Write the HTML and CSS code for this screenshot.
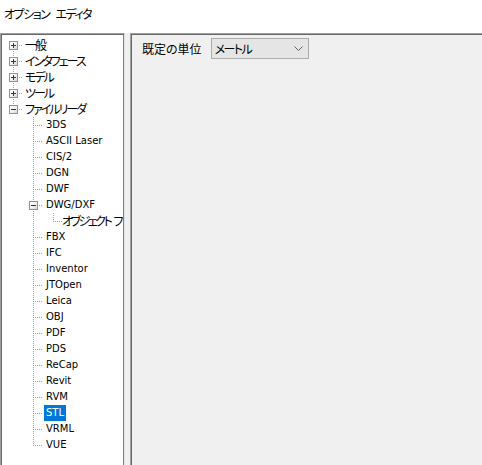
FILE: index.html
```html
<!DOCTYPE html>
<html lang="ja">
<head>
<meta charset="utf-8">
<title>オプション エディタ</title>
<link rel="stylesheet" href="styles.css">
</head>
<body>
<div class="window">
  <div class="titlebar">オプション エディタ</div>
  <div class="panes">
    <div class="tree">
      <div class="row"><span class="cell first"><span class="box plus"></span></span><span class="label ja">一般</span></div>
      <div class="row"><span class="cell tee"><span class="box plus"></span></span><span class="label ja">インタフェース</span></div>
      <div class="row"><span class="cell tee"><span class="box plus"></span></span><span class="label ja">モデル</span></div>
      <div class="row"><span class="cell tee"><span class="box plus"></span></span><span class="label ja">ツール</span></div>
      <div class="row"><span class="cell elbow"><span class="box minus"></span></span><span class="label ja">ファイルリーダ</span></div>
      <div class="row"><span class="cell"></span><span class="cell tee"></span><span class="label">3DS</span></div>
      <div class="row"><span class="cell"></span><span class="cell tee"></span><span class="label">ASCII Laser</span></div>
      <div class="row"><span class="cell"></span><span class="cell tee"></span><span class="label">CIS/2</span></div>
      <div class="row"><span class="cell"></span><span class="cell tee"></span><span class="label">DGN</span></div>
      <div class="row"><span class="cell"></span><span class="cell tee"></span><span class="label">DWF</span></div>
      <div class="row"><span class="cell"></span><span class="cell tee"><span class="box minus"></span></span><span class="label">DWG/DXF</span></div>
      <div class="row"><span class="cell"></span><span class="cell line"></span><span class="cell elbow"></span><span class="label ja clip">オブジェクト フ</span></div>
      <div class="row"><span class="cell"></span><span class="cell tee"></span><span class="label">FBX</span></div>
      <div class="row"><span class="cell"></span><span class="cell tee"></span><span class="label">IFC</span></div>
      <div class="row"><span class="cell"></span><span class="cell tee"></span><span class="label">Inventor</span></div>
      <div class="row"><span class="cell"></span><span class="cell tee"></span><span class="label">JTOpen</span></div>
      <div class="row"><span class="cell"></span><span class="cell tee"></span><span class="label">Leica</span></div>
      <div class="row"><span class="cell"></span><span class="cell tee"></span><span class="label">OBJ</span></div>
      <div class="row"><span class="cell"></span><span class="cell tee"></span><span class="label">PDF</span></div>
      <div class="row"><span class="cell"></span><span class="cell tee"></span><span class="label">PDS</span></div>
      <div class="row"><span class="cell"></span><span class="cell tee"></span><span class="label">ReCap</span></div>
      <div class="row"><span class="cell"></span><span class="cell tee"></span><span class="label">Revit</span></div>
      <div class="row"><span class="cell"></span><span class="cell tee"></span><span class="label">RVM</span></div>
      <div class="row"><span class="cell"></span><span class="cell tee"></span><span class="label selected">STL</span></div>
      <div class="row"><span class="cell"></span><span class="cell tee"></span><span class="label">VRML</span></div>
      <div class="row"><span class="cell"></span><span class="cell elbow"></span><span class="label">VUE</span></div>
    </div>
    <div class="content">
      <div class="field">
        <span class="field-label ja">既定の単位</span>
        <div class="combo">
          <span class="combo-text ja">メートル</span>
          <svg class="chev" width="9" height="5" viewBox="0 0 9 5"><path d="M0.5 0.5 L4.5 4.5 L8.5 0.5" fill="none" stroke="#606060" stroke-width="1"/></svg>
        </div>
      </div>
    </div>
  </div>
</div>
</body>
</html>
```

FILE: styles.css
```css
html, body {
  margin: 0;
  padding: 0;
  background: #ffffff;
}
body {
  width: 482px;
  height: 465px;
  overflow: hidden;
  font-family: "DejaVu Sans", "Noto Sans CJK JP", sans-serif;
  font-size: 10px;
  color: #000;
}
.window {
  display: flex;
  flex-direction: column;
  height: 465px;
}
.titlebar {
  height: 33px;
  box-sizing: border-box;
  padding: 6px 0 0 4px;
  font-family: "Noto Sans CJK JP", sans-serif;
  font-size: 12px;
  line-height: 16px;
  font-feature-settings: "palt";
  letter-spacing: -1.5px;
  word-spacing: 5px;
}
.panes {
  flex: 1;
  display: flex;
  gap: 5px;
  background: #f0f0f0;
}
.tree {
  width: 125px;
  box-sizing: border-box;
  background: #fff;
  border-top: 1px solid #a0a0a0;
  border-left: 1px solid #a0a0a0;
  border-right: 1px solid #e3e3e3;
  box-shadow: inset 1px 1px 0 #696969, inset -1px 0 0 #828282;
  padding: 3px 0 0 2px;
  overflow: hidden;
}
.content {
  flex: 1;
  box-sizing: border-box;
  border-top: 1px solid #a0a0a0;
  border-left: 1px solid #a0a0a0;
  box-shadow: inset 1px 1px 0 #696969;
  background: #f0f0f0;
  padding: 3px 0 0 11px;
}
.row {
  display: flex;
  height: 16px;
  align-items: stretch;
  white-space: nowrap;
}
.cell {
  flex: 0 0 20px;
  width: 20px;
  display: flex;
  align-items: center;
}
.cell.tee {
  background-image:
    repeating-linear-gradient(to bottom, #a0a0a0 0 1px, transparent 1px 2px),
    repeating-linear-gradient(to right, #a0a0a0 0 1px, transparent 1px 2px);
  background-size: 1px 16px, 9px 1px;
  background-position: 10px 0, 12px 8px;
  background-repeat: no-repeat;
}
.cell.first {
  background-image:
    repeating-linear-gradient(to bottom, #a0a0a0 0 1px, transparent 1px 2px),
    repeating-linear-gradient(to right, #a0a0a0 0 1px, transparent 1px 2px);
  background-size: 1px 8px, 9px 1px;
  background-position: 10px 8px, 12px 8px;
  background-repeat: no-repeat;
}
.cell.elbow {
  background-image:
    repeating-linear-gradient(to bottom, #a0a0a0 0 1px, transparent 1px 2px),
    repeating-linear-gradient(to right, #a0a0a0 0 1px, transparent 1px 2px);
  background-size: 1px 9px, 9px 1px;
  background-position: 10px 0, 12px 8px;
  background-repeat: no-repeat;
}
.cell.line {
  background-image: repeating-linear-gradient(to bottom, #a0a0a0 0 1px, transparent 1px 2px);
  background-size: 1px 16px;
  background-position: 10px 0;
  background-repeat: no-repeat;
}
.box {
  width: 9px;
  height: 9px;
  box-sizing: border-box;
  margin-left: 6px;
  border: 1px solid #919191;
  background: linear-gradient(to bottom right, #ffffff 30%, #d8d8d8);
  background-color: #f4f4f4;
  position: relative;
}
.box::before {
  content: "";
  position: absolute;
  left: 1px;
  top: 3px;
  width: 5px;
  height: 1px;
  background: #1c3a8c;
}
.box.plus::after {
  content: "";
  position: absolute;
  left: 3px;
  top: 1px;
  width: 1px;
  height: 5px;
  background: #1c3a8c;
}
.box.minus::before {
  background: #333;
}
.label {
  padding: 0 2px;
  margin-left: 1px;
  line-height: 16px;
  font-size: 10px;
}
.ja {
  font-family: "Noto Sans CJK JP", sans-serif;
  font-size: 12px;
  font-feature-settings: "palt";
  letter-spacing: -2px;
}
.label.ja {
  margin-left: 0;
}
.label.clip {
  padding-left: 0;
  margin-left: -1px;
  letter-spacing: -2.5px;
  word-spacing: 3px;
}
.selected {
  background: #0078d7;
  color: #fff;
}
.field {
  display: flex;
  align-items: center;
  gap: 9px;
  padding-top: 1px;
}
.field-label {
  letter-spacing: 0;
}
.combo {
  width: 98px;
  height: 21px;
  box-sizing: border-box;
  border: 1px solid #adadad;
  background: #e5e5e5;
  display: flex;
  align-items: center;
  justify-content: space-between;
  padding: 0 5px 0 3px;
}
.combo-text {
  line-height: 16px;
  letter-spacing: -1.5px;
}
```
